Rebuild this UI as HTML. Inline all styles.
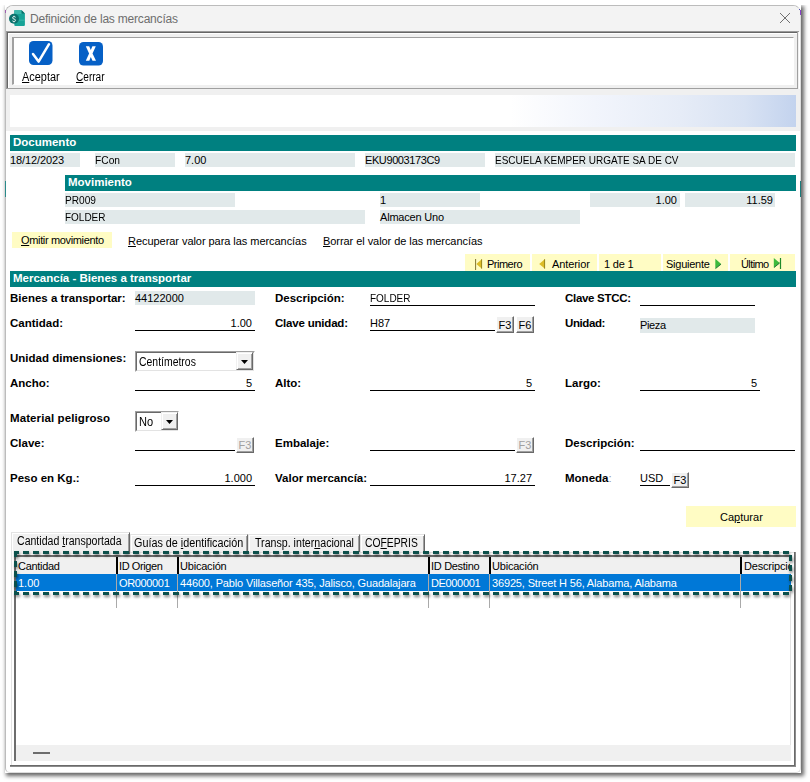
<!DOCTYPE html>
<html><head><meta charset="utf-8">
<style>
html,body{margin:0;padding:0;}
body{width:810px;height:782px;position:relative;overflow:hidden;background:#fff;font-family:"Liberation Sans",sans-serif;font-size:11px;color:#000;}
.a{position:absolute;}
.t{position:absolute;line-height:14px;white-space:pre;font-size:11px;}
.b{font-weight:bold;font-size:11.5px;}
.teal{position:absolute;background:#008080;}
.wt{color:#fff;font-weight:bold;font-size:11.5px;}
.fld{position:absolute;background:#e1e9ea;height:14px;}
.ul{position:absolute;height:1px;background:#000;}
.yb{position:absolute;background:#fffcc4;}
.btn3{position:absolute;box-sizing:border-box;background:#f0f0f0;border-top:1px solid #fff;border-left:1px solid #fff;border-right:1px solid #696969;border-bottom:1px solid #696969;box-shadow:inset -1px -1px 0 #a0a0a0;}
.btn3 span{position:absolute;left:0;right:0;text-align:center;top:1px;line-height:14px;font-size:11px;}
.combo{position:absolute;box-sizing:border-box;background:#fff;border-top:1px solid #a0a0a0;border-left:1px solid #a0a0a0;border-right:1px solid #fff;border-bottom:1px solid #fff;}
.combo .in{position:absolute;left:0;top:0;right:0;bottom:0;border-top:1px solid #696969;border-left:1px solid #696969;border-right:1px solid #e3e3e3;border-bottom:1px solid #e3e3e3;}
.dd{position:absolute;box-sizing:border-box;background:#f0f0f0;border-top:1px solid #f0f0f0;border-left:1px solid #f0f0f0;border-right:1px solid #696969;border-bottom:1px solid #696969;box-shadow:inset 1px 1px 0 #fff,inset -1px -1px 0 #a0a0a0;}
.tri{position:absolute;width:0;height:0;border-left:4px solid transparent;border-right:4px solid transparent;border-top:4px solid #000;}
.sep{position:absolute;width:2px;background:#000;}
.gsep{position:absolute;width:1px;background:#aaaaaa;}
</style></head><body>

<!-- window shadow -->
<div class="a" style="left:5px;top:5px;width:796px;height:768px;box-shadow:2px 2px 4px 1px rgba(0,0,0,0.6);background:#fff;"></div>
<!-- window -->
<div class="a" style="left:5px;top:5px;width:796px;height:768px;box-sizing:border-box;border:1px solid #bcbcbc;border-right-color:#dcdcdc;border-bottom-color:#dcdcdc;border-radius:8px 8px 5px 5px;background:#fff;overflow:hidden;">
  <div class="a" style="left:0;top:0;width:796px;height:26px;background:#f3f3f3;"></div>
</div>
<div class="a" style="left:0;top:0;width:810px;height:5px;background:#fff;"></div>
<div class="a" style="left:800px;top:10px;width:1px;height:5px;background:#8a40c8;"></div>
<div class="a" style="left:799px;top:9px;width:1px;height:1px;background:#5050b0;"></div>
<div class="a" style="left:5px;top:10px;width:1px;height:3px;background:#a060b0;"></div>
<div class="a" style="left:5px;top:181px;width:1px;height:16px;background:#2a8a8a;"></div>
<div class="a" style="left:800px;top:181px;width:1px;height:16px;background:#1a7a7a;"></div>
<!-- app icon -->
<svg class="a" style="left:6px;top:7px" width="22" height="22" viewBox="0 0 22 22">
  <path d="M8.3 3.2 H15.6 L18.9 6.4 V17.9 Q18.9 18.9 17.9 18.9 H9.3 Q8.3 18.9 8.3 17.9 Z" fill="#17a397"/>
  <path d="M8.3 3.2 H15.6 V7 H8.3 Z" fill="#3cb7ab"/>
  <path d="M15.6 3.2 L18.9 6.4 H15.6 Z" fill="#0b6e68"/>
  <path d="M8.3 12.5 H18.9 V14 H8.3 Z" fill="#3cb7ab" opacity="0.6"/>
  <circle cx="8" cy="11.8" r="5" fill="#0b716d"/>
  <path d="M9.6 10.3 Q9.2 9.6 8 9.6 Q6.6 9.6 6.6 10.8 Q6.6 11.8 8 12 Q9.5 12.2 9.5 13.3 Q9.5 14.5 8 14.5 Q6.8 14.5 6.4 13.8 M8 8.8 V9.6 M8 14.5 V15.3" stroke="#e8f4f2" stroke-width="0.95" fill="none"/>
</svg>
<div class="t" style="left:30px;top:12px;font-size:12px;letter-spacing:-0.2px;color:#6e6e6e;">Definición de las mercancías</div>
<svg class="a" style="left:779px;top:12px" width="12" height="12" viewBox="0 0 12 12"><path d="M1 1 L11 11 M11 1 L1 11" stroke="#707070" stroke-width="1" fill="none"/></svg>

<!-- toolbar -->
<div class="a" style="left:6px;top:31px;width:793px;height:58px;background:#f0f0f0;"></div>
<div class="a" style="left:6px;top:31px;width:793px;height:1px;background:#9a9a9a;"></div>
<div class="a" style="left:6px;top:31px;width:1px;height:58px;background:#9a9a9a;"></div>
<div class="a" style="left:7px;top:32px;width:791px;height:1px;background:#666;"></div>
<div class="a" style="left:7px;top:32px;width:1px;height:57px;background:#666;"></div>
<div class="a" style="left:797px;top:32px;width:1px;height:57px;background:#a0a0a0;"></div>
<div class="a" style="left:7px;top:88px;width:791px;height:1px;background:#a0a0a0;"></div>
<div class="a" style="left:6px;top:89px;width:794px;height:2px;background:#fafafa;"></div>
<div class="a" style="left:8px;top:33px;width:789px;height:1px;background:#fff;"></div>
<div class="a" style="left:8px;top:33px;width:1px;height:55px;background:#fff;"></div>
<div class="a" style="left:12px;top:37px;width:782px;height:48px;box-sizing:border-box;border-top:1px solid #a0a0a0;border-left:2px solid #a0a0a0;border-right:1px solid #fff;border-bottom:1px solid #fff;background:#fff;"></div>

<svg class="a" style="left:29px;top:41px" width="24" height="24" viewBox="0 0 24 24">
  <rect x="0" y="0" width="23.5" height="24" rx="4.5" fill="#0660c6"/>
  <path d="M4 13 L9.6 20.6 L20 3.2" stroke="#fff" stroke-width="2.5" fill="none" stroke-linecap="round" stroke-linejoin="round"/>
</svg>
<div class="t" style="left:22px;top:70px;font-size:12px;transform-origin:0 0;transform:scaleX(0.91);"><u>A</u>ceptar</div>
<svg class="a" style="left:79px;top:42px" width="24" height="24" viewBox="0 0 24 24">
  <rect x="0" y="0" width="24" height="23.5" rx="4.5" fill="#0660c6"/>
  <path d="M6.8 4.2 L10.2 4.2 L11.8 7.9 L13.4 4.2 L16.8 4.2 L13.5 11.6 L17 18.8 L13.5 18.8 L11.8 15 L10.3 18.8 L6.8 18.8 L10.1 11.6 Z" fill="#fff"/>
</svg>
<div class="t" style="left:76px;top:70px;font-size:12px;transform-origin:0 0;transform:scaleX(0.84);"><u>C</u>errar</div>

<!-- gradient band panel -->
<div class="a" style="left:6px;top:89px;width:794px;height:42px;background:#f0f0f0;"></div>
<div class="a" style="left:10px;top:95px;width:786px;height:32px;background:linear-gradient(to right,#ffffff 0px,#ffffff 500px,#f2f5fc 585px,#e6ecf7 670px,#d8e2f3 735px,#c3d3ee 786px);"></div>

<!-- Documento -->
<div class="teal" style="left:10px;top:135px;width:786px;height:16px;"></div>
<div class="t wt" style="left:13px;top:135px;">Documento</div>
<div class="fld" style="left:10px;top:153px;width:70px;"></div>
<div class="t" style="left:10px;top:153px;letter-spacing:-0.1px;">18/12/2023</div>
<div class="fld" style="left:95px;top:153px;width:80px;"></div>
<div class="t" style="left:95px;top:153px;transform-origin:0 0;transform:scaleX(0.93);">FCon</div>
<div class="fld" style="left:185px;top:153px;width:170px;"></div>
<div class="t" style="left:185px;top:153px;">7.00</div>
<div class="fld" style="left:365px;top:153px;width:120px;"></div>
<div class="t" style="left:365px;top:153px;letter-spacing:-0.4px;">EKU9003173C9</div>
<div class="fld" style="left:495px;top:153px;width:300px;"></div>
<div class="t" style="left:495px;top:153px;transform-origin:0 0;transform:scaleX(0.908);">ESCUELA KEMPER URGATE SA DE CV</div>

<!-- Movimiento -->
<div class="teal" style="left:65px;top:175px;width:731px;height:16px;"></div>
<div class="t wt" style="left:68px;top:175px;">Movimiento</div>
<div class="fld" style="left:65px;top:193px;width:170px;"></div>
<div class="t" style="left:65px;top:193px;transform-origin:0 0;transform:scaleX(0.92);">PR009</div>
<div class="fld" style="left:380px;top:193px;width:100px;"></div>
<div class="t" style="left:380px;top:193px;">1</div>
<div class="fld" style="left:590px;top:193px;width:90px;"></div>
<div class="t" style="left:590px;top:193px;width:87px;text-align:right;">1.00</div>
<div class="fld" style="left:685px;top:193px;width:90px;"></div>
<div class="t" style="left:685px;top:193px;width:88px;text-align:right;">11.59</div>
<div class="fld" style="left:65px;top:210px;width:300px;"></div>
<div class="t" style="left:65px;top:210px;transform-origin:0 0;transform:scaleX(0.906);">FOLDER</div>
<div class="fld" style="left:380px;top:210px;width:200px;"></div>
<div class="t" style="left:380px;top:210px;letter-spacing:-0.2px;">Almacen Uno</div>

<!-- action links -->
<div class="yb" style="left:12px;top:232px;width:100px;height:16px;"></div>
<div class="t" style="left:21px;top:233px;letter-spacing:-0.35px;"><u>O</u>mitir movimiento</div>
<div class="t" style="left:128px;top:234px;letter-spacing:-0.05px;"><u>R</u>ecuperar valor para las mercancías</div>
<div class="t" style="left:323px;top:234px;letter-spacing:-0.06px;"><u>B</u>orrar el valor de las mercancías</div>

<!-- navigation -->
<div class="yb" style="left:465px;top:254px;width:65px;height:17px;"></div>
<div class="yb" style="left:532px;top:254px;width:65px;height:17px;"></div>
<div class="yb" style="left:599px;top:254px;width:62px;height:17px;"></div>
<div class="yb" style="left:663px;top:254px;width:65px;height:17px;"></div>
<div class="yb" style="left:730px;top:254px;width:65px;height:17px;"></div>

<svg class="a" style="left:460px;top:254px" width="340" height="17" viewBox="0 0 340 17">
<rect x="15" y="5" width="1.1" height="11" fill="#8c8240"/>
<path d="M16.3 10.1 L22 5 V14.8 Z" fill="#dcbc28"/><path d="M21.6 5.3 V14.6" stroke="#8f801c" stroke-width="0.9"/>
<path d="M79.2 10.1 L85 5 V14.8 Z" fill="#dcbc28"/><path d="M84.6 5.3 V14.6" stroke="#8f801c" stroke-width="0.9"/>
<path d="M255.3 4.8 V14.8 L261.2 10.1 Z" fill="#3cba3c"/><path d="M255.6 14.5 L261 10.2" stroke="#1d6a35" stroke-width="0.9"/>
<path d="M313.8 4 V13.8 L319.8 8.9 Z" fill="#3cba3c"/><path d="M314.1 13.5 L319.6 9" stroke="#1d6a35" stroke-width="0.9"/>
<rect x="319.9" y="4" width="1.2" height="11" fill="#1e8a2a"/>
</svg>
<div class="t" style="left:487px;top:257px;letter-spacing:-0.5px;">Primero</div>

<div class="t" style="left:552px;top:257px;letter-spacing:-0.1px;">Anterior</div>
<div class="t" style="left:604px;top:257px;letter-spacing:-0.2px;">1 de 1</div>
<div class="t" style="left:666px;top:257px;letter-spacing:-0.25px;">Siguiente</div>

<div class="t" style="left:741px;top:257px;letter-spacing:-0.6px;">Último</div>


<!-- Mercancía section -->
<div class="teal" style="left:10px;top:271px;width:786px;height:16px;"></div>
<div class="t wt" style="left:13px;top:271px;">Mercancía - Bienes a transportar</div>

<div class="t b" style="left:10px;top:291px;">Bienes a transportar:</div>
<div class="fld" style="left:135px;top:291px;width:120px;"></div>
<div class="t" style="left:135px;top:291px;">44122000</div>
<div class="t b" style="left:275px;top:291px;">Descripción:</div>
<div class="t" style="left:370px;top:291px;transform-origin:0 0;transform:scaleX(0.906);">FOLDER</div>
<div class="ul" style="left:370px;top:305px;width:165px;"></div>
<div class="t b" style="left:565px;top:291px;letter-spacing:-0.3px;">Clave STCC:</div>
<div class="ul" style="left:640px;top:305px;width:115px;"></div>

<div class="t b" style="left:10px;top:316px;">Cantidad:</div>
<div class="t" style="left:135px;top:316px;width:117px;text-align:right;">1.00</div>
<div class="ul" style="left:135px;top:330px;width:120px;"></div>
<div class="t b" style="left:275px;top:316px;letter-spacing:-0.2px;">Clave unidad:</div>
<div class="t" style="left:370px;top:316px;">H87</div>
<div class="ul" style="left:370px;top:330px;width:125px;"></div>
<div class="btn3" style="left:496px;top:316px;width:18px;height:17px;"><span>F3</span></div>
<div class="btn3" style="left:516px;top:316px;width:18px;height:17px;"><span>F6</span></div>
<div class="t b" style="left:565px;top:316px;letter-spacing:-0.4px;">Unidad:</div>
<div class="fld" style="left:640px;top:318px;width:115px;height:15px;"></div>
<div class="t" style="left:640px;top:318px;letter-spacing:-0.35px;">Pieza</div>

<div class="t b" style="left:10px;top:351px;">Unidad dimensiones:</div>
<div class="combo" style="left:135px;top:351px;width:120px;height:21px;"><div class="in"></div></div>
<div class="t" style="left:139px;top:355px;font-size:12px;transform-origin:0 0;transform:scaleX(0.87);">Centímetros</div>
<div class="dd" style="left:236px;top:352px;width:17px;height:18px;"></div>
<svg class="a" style="left:241px;top:360px" width="7" height="4" viewBox="0 0 7 4"><path d="M0 0 H7 L3.5 4 Z" fill="#000"/></svg>

<div class="t b" style="left:10px;top:376px;">Ancho:</div>
<div class="t" style="left:135px;top:376px;width:117px;text-align:right;">5</div>
<div class="ul" style="left:135px;top:390px;width:120px;"></div>
<div class="t b" style="left:275px;top:376px;">Alto:</div>
<div class="t" style="left:370px;top:376px;width:162px;text-align:right;">5</div>
<div class="ul" style="left:370px;top:390px;width:165px;"></div>
<div class="t b" style="left:565px;top:376px;">Largo:</div>
<div class="t" style="left:640px;top:376px;width:117px;text-align:right;">5</div>
<div class="ul" style="left:640px;top:390px;width:120px;"></div>

<div class="t b" style="left:10px;top:411px;letter-spacing:0.1px;">Material peligroso</div>
<div class="combo" style="left:135px;top:411px;width:44px;height:21px;"><div class="in"></div></div>
<div class="t" style="left:139px;top:415px;font-size:12px;transform-origin:0 0;transform:scaleX(0.92);">No</div>
<div class="dd" style="left:161px;top:412px;width:17px;height:18px;"></div>
<svg class="a" style="left:166px;top:420px" width="7" height="4" viewBox="0 0 7 4"><path d="M0 0 H7 L3.5 4 Z" fill="#000"/></svg>

<div class="t b" style="left:10px;top:436px;">Clave:</div>
<div class="ul" style="left:135px;top:450px;width:100px;"></div>
<div class="btn3" style="left:236px;top:437px;width:18px;height:16px;"><span style="color:#a0a0a0;top:0">F3</span></div>
<div class="t b" style="left:275px;top:436px;">Embalaje:</div>
<div class="ul" style="left:370px;top:450px;width:145px;"></div>
<div class="btn3" style="left:516px;top:437px;width:18px;height:16px;"><span style="color:#a0a0a0;top:0">F3</span></div>
<div class="t b" style="left:565px;top:436px;">Descripción:</div>
<div class="ul" style="left:640px;top:450px;width:155px;"></div>

<div class="t b" style="left:10px;top:471px;">Peso en Kg.:</div>
<div class="t" style="left:135px;top:471px;width:117px;text-align:right;">1.000</div>
<div class="ul" style="left:135px;top:485px;width:120px;"></div>
<div class="t b" style="left:275px;top:471px;">Valor mercancía:</div>
<div class="t" style="left:370px;top:471px;width:162px;text-align:right;">17.27</div>
<div class="ul" style="left:370px;top:485px;width:165px;"></div>
<div class="t b" style="left:565px;top:471px;">Moneda<span style="color:#999;font-weight:normal">:</span></div>
<div class="t" style="left:640px;top:471px;">USD</div>
<div class="ul" style="left:640px;top:485px;width:30px;"></div>
<div class="btn3" style="left:671px;top:472px;width:18px;height:16px;"><span style="top:0">F3</span></div>

<div class="yb" style="left:686px;top:506px;width:110px;height:21px;"></div>
<div class="t" style="left:720px;top:510px;">Ca<u>p</u>turar</div>

<!-- tabs -->
<div class="a" style="left:11px;top:552px;width:1px;height:213px;background:#e3e3e3;"></div>
<div class="a" style="left:11px;top:552px;width:783px;height:1px;background:#e3e3e3;"></div>
<div class="a" style="left:10px;top:765px;width:786px;height:1px;background:#6a6a6a;"></div>
<div class="a" style="left:10px;top:766px;width:786px;height:1px;background:#8c8c8c;"></div>
<div class="a" style="left:794px;top:552px;width:1px;height:214px;background:#6a6a6a;"></div>
<div class="a" style="left:795px;top:552px;width:1px;height:215px;background:#8c8c8c;"></div>
<div class="a" style="left:790px;top:557px;width:1px;height:204px;background:#e3e3e3;"></div>

<div class="a" style="left:130px;top:534px;width:118px;height:18px;box-sizing:border-box;background:#f0f0f0;border-top:1px solid #e3e3e3;border-left:1px solid #e3e3e3;border-right:1px solid #696969;box-shadow:inset 1px 1px 0 #fff,inset -1px 0 0 #a0a0a0;"></div>
<div class="t" style="left:134px;top:536px;font-size:12px;transform-origin:0 0;transform:scaleX(0.9);">Guías de <u>i</u>dentificación</div>
<div class="a" style="left:248px;top:534px;width:112px;height:18px;box-sizing:border-box;background:#f0f0f0;border-top:1px solid #e3e3e3;border-left:1px solid #e3e3e3;border-right:1px solid #696969;box-shadow:inset 1px 1px 0 #fff,inset -1px 0 0 #a0a0a0;"></div>
<div class="t" style="left:255px;top:536px;font-size:12px;transform-origin:0 0;transform:scaleX(0.886);">Transp. inter<u>n</u>acional</div>
<div class="a" style="left:360px;top:534px;width:65px;height:18px;box-sizing:border-box;background:#f0f0f0;border-top:1px solid #e3e3e3;border-left:1px solid #e3e3e3;border-right:1px solid #696969;box-shadow:inset 1px 1px 0 #fff,inset -1px 0 0 #a0a0a0;"></div>
<div class="t" style="left:365px;top:536px;font-size:12px;transform-origin:0 0;transform:scaleX(0.86);">CO<u>F</u>EPRIS</div>
<div class="a" style="left:11px;top:532px;width:119px;height:22px;box-sizing:border-box;background:#f0f0f0;border-top:1px solid #e3e3e3;border-left:1px solid #e3e3e3;border-right:1px solid #696969;box-shadow:inset 1px 1px 0 #fff,inset -1px 0 0 #a0a0a0;"></div>
<div class="t" style="left:17px;top:534px;font-size:12px;transform-origin:0 0;transform:scaleX(0.88);">Cantidad <u>t</u>ransportada</div>

<!-- grid -->
<div class="a" style="left:14px;top:555px;width:2px;height:206px;background:#6d6d6d;"></div>
<div class="a" style="left:14px;top:555px;width:777px;height:2px;background:#6d6d6d;"></div>
<div class="a" style="left:16px;top:557px;width:775px;height:17px;background:#f0f0f0;"></div>
<div class="t" style="left:18px;top:559px;letter-spacing:-0.3px;">Cantidad</div>
<div class="t" style="left:119px;top:559px;letter-spacing:-0.4px;">ID Origen</div>
<div class="t" style="left:180px;top:559px;letter-spacing:-0.2px;">Ubicación</div>
<div class="t" style="left:431px;top:559px;letter-spacing:-0.3px;">ID Destino</div>
<div class="t" style="left:492px;top:559px;letter-spacing:-0.2px;">Ubicación</div>
<div class="a" style="left:744px;top:557px;width:46px;height:17px;overflow:hidden;"><div class="t" style="left:0;top:2px;letter-spacing:-0.2px;">Descripción</div></div>
<div class="sep" style="left:116px;top:557px;height:17px;"></div>
<div class="sep" style="left:177px;top:557px;height:17px;"></div>
<div class="sep" style="left:428px;top:557px;height:17px;"></div>
<div class="sep" style="left:489px;top:557px;height:17px;"></div>
<div class="sep" style="left:740px;top:557px;height:17px;"></div>

<div class="a" style="left:16px;top:574px;width:775px;height:17px;background:#0078d7;"></div>
<div class="gsep" style="left:116px;top:574px;height:34px;"></div>
<div class="gsep" style="left:177px;top:574px;height:34px;"></div>
<div class="gsep" style="left:428px;top:574px;height:34px;"></div>
<div class="gsep" style="left:489px;top:574px;height:34px;"></div>
<div class="gsep" style="left:740px;top:574px;height:34px;"></div>
<div class="t" style="left:18px;top:576px;color:#fff;">1.00</div>
<div class="t" style="left:119px;top:576px;color:#fff;letter-spacing:-0.35px;">OR000001</div>
<div class="t" style="left:180px;top:576px;color:#fff;letter-spacing:-0.15px;">44600, Pablo Villaseñor 435, Jalisco, Guadalajara</div>
<div class="t" style="left:431px;top:576px;color:#fff;letter-spacing:-0.35px;">DE000001</div>
<div class="t" style="left:492px;top:576px;color:#fff;letter-spacing:-0.15px;">36925, Street H 56, Alabama, Alabama</div>

<div class="a" style="left:16px;top:745px;width:775px;height:16px;background:#f0f0f0;"></div>
<div class="a" style="left:33px;top:752px;width:17px;height:2px;background:#6d6d6d;"></div>

<!-- dashed highlight -->
<svg class="a" style="left:0;top:0;filter:drop-shadow(1px 2px 1.5px rgba(0,0,0,0.5));" width="810" height="782" viewBox="0 0 810 782"><path d="M14 551h5v3h-5ZM14 592h5v3h-5ZM23 551h6v3h-6ZM23 592h6v3h-6ZM33 551h6v3h-6ZM33 592h6v3h-6ZM43 551h6v3h-6ZM43 592h6v3h-6ZM53 551h6v3h-6ZM53 592h6v3h-6ZM63 551h6v3h-6ZM63 592h6v3h-6ZM73 551h6v3h-6ZM73 592h6v3h-6ZM83 551h6v3h-6ZM83 592h6v3h-6ZM93 551h6v3h-6ZM93 592h6v3h-6ZM103 551h6v3h-6ZM103 592h6v3h-6ZM113 551h6v3h-6ZM113 592h6v3h-6ZM123 551h6v3h-6ZM123 592h6v3h-6ZM133 551h6v3h-6ZM133 592h6v3h-6ZM143 551h6v3h-6ZM143 592h6v3h-6ZM153 551h6v3h-6ZM153 592h6v3h-6ZM163 551h6v3h-6ZM163 592h6v3h-6ZM173 551h6v3h-6ZM173 592h6v3h-6ZM183 551h6v3h-6ZM183 592h6v3h-6ZM193 551h6v3h-6ZM193 592h6v3h-6ZM203 551h6v3h-6ZM203 592h6v3h-6ZM213 551h6v3h-6ZM213 592h6v3h-6ZM223 551h6v3h-6ZM223 592h6v3h-6ZM233 551h6v3h-6ZM233 592h6v3h-6ZM243 551h6v3h-6ZM243 592h6v3h-6ZM253 551h6v3h-6ZM253 592h6v3h-6ZM263 551h6v3h-6ZM263 592h6v3h-6ZM273 551h6v3h-6ZM273 592h6v3h-6ZM283 551h6v3h-6ZM283 592h6v3h-6ZM293 551h6v3h-6ZM293 592h6v3h-6ZM303 551h6v3h-6ZM303 592h6v3h-6ZM313 551h6v3h-6ZM313 592h6v3h-6ZM323 551h6v3h-6ZM323 592h6v3h-6ZM333 551h6v3h-6ZM333 592h6v3h-6ZM343 551h6v3h-6ZM343 592h6v3h-6ZM353 551h6v3h-6ZM353 592h6v3h-6ZM363 551h6v3h-6ZM363 592h6v3h-6ZM373 551h6v3h-6ZM373 592h6v3h-6ZM383 551h6v3h-6ZM383 592h6v3h-6ZM393 551h6v3h-6ZM393 592h6v3h-6ZM403 551h6v3h-6ZM403 592h6v3h-6ZM413 551h6v3h-6ZM413 592h6v3h-6ZM423 551h6v3h-6ZM423 592h6v3h-6ZM433 551h6v3h-6ZM433 592h6v3h-6ZM443 551h6v3h-6ZM443 592h6v3h-6ZM453 551h6v3h-6ZM453 592h6v3h-6ZM463 551h6v3h-6ZM463 592h6v3h-6ZM473 551h6v3h-6ZM473 592h6v3h-6ZM483 551h6v3h-6ZM483 592h6v3h-6ZM493 551h6v3h-6ZM493 592h6v3h-6ZM503 551h6v3h-6ZM503 592h6v3h-6ZM513 551h6v3h-6ZM513 592h6v3h-6ZM523 551h6v3h-6ZM523 592h6v3h-6ZM533 551h6v3h-6ZM533 592h6v3h-6ZM543 551h6v3h-6ZM543 592h6v3h-6ZM553 551h6v3h-6ZM553 592h6v3h-6ZM563 551h6v3h-6ZM563 592h6v3h-6ZM573 551h6v3h-6ZM573 592h6v3h-6ZM583 551h6v3h-6ZM583 592h6v3h-6ZM593 551h6v3h-6ZM593 592h6v3h-6ZM603 551h6v3h-6ZM603 592h6v3h-6ZM613 551h6v3h-6ZM613 592h6v3h-6ZM623 551h6v3h-6ZM623 592h6v3h-6ZM633 551h6v3h-6ZM633 592h6v3h-6ZM643 551h6v3h-6ZM643 592h6v3h-6ZM653 551h6v3h-6ZM653 592h6v3h-6ZM663 551h6v3h-6ZM663 592h6v3h-6ZM673 551h6v3h-6ZM673 592h6v3h-6ZM683 551h6v3h-6ZM683 592h6v3h-6ZM693 551h6v3h-6ZM693 592h6v3h-6ZM703 551h6v3h-6ZM703 592h6v3h-6ZM713 551h6v3h-6ZM713 592h6v3h-6ZM723 551h6v3h-6ZM723 592h6v3h-6ZM733 551h6v3h-6ZM733 592h6v3h-6ZM743 551h6v3h-6ZM743 592h6v3h-6ZM753 551h6v3h-6ZM753 592h6v3h-6ZM763 551h6v3h-6ZM763 592h6v3h-6ZM773 551h6v3h-6ZM773 592h6v3h-6ZM783 551h6v3h-6ZM783 592h6v3h-6ZM14 551h3v6h-3ZM14 561h3v6h-3ZM14 571h3v6h-3ZM14 581h3v6h-3ZM14 591h3v4h-3ZM789 555h3v6h-3ZM789 565h3v6h-3ZM789 575h3v6h-3ZM789 585h3v6h-3Z" fill="#0c504b"/></svg>
</body></html>
